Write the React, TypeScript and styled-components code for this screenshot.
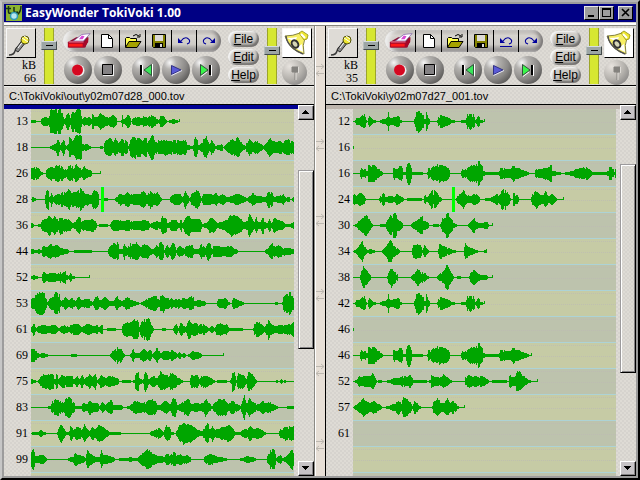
import React from "react";
import styled, { createGlobalStyle, css } from "styled-components";

/* ---------- waveform data ---------- */

// Envelope points are [position, half height] pairs. Positions are in thirds
// of a column; each line is stored in chunks of 480 positions.
const CHUNK = 480;
const COLUMNS = 263;

type Line = { label: string; head?: string; tail?: string; cursor?: number };
type DeckData = {
  path: string;
  kb: number;
  origin: number;
  active: boolean;
  shaded: number;
  thumb: [number, number, number];
  undoLine: boolean;
  lines: Line[];
};

const SPEECH_A =
  "99,0 104,0 108,3 118,3 122,5 133,6 138,1 143,0 145,5 150,4 158,1 175,0 190,2 200,3 204,9 208,3 215,3 222,4 235,5 241,1 250,0 280,0 284,4 289,10 292,12 300,8 310,6 314,1 319,9 324,3 330,0 350,0 355,5 360,6 370,5 380,4 396,1 410,0 436,1 442,7 450,8 460,6 466,1 474,5 479,4";
const SPEECH_B =
  "99,0 118,0 122,5 128,3 135,4 140,1 145,8 152,7 160,8 170,6 182,2 190,0 217,0 220,6 225,4 232,4 238,7 246,7 248,1 256,1 260,10 268,11 272,6 276,1 292,1 305,1 310,0 320,0 323,5 330,4 338,7 345,6 355,9 365,8 375,7 385,5 390,0 420,0 425,4 432,3 445,6 450,8 460,7 470,9 474,12 479,12";
const SPEECH_B_TAIL =
  "0,8 6,7 9,2 20,1 48,1 55,1 60,5 70,5 82,4 90,4 100,8 105,5 115,5 125,3 135,2 150,0";

const LEFT: DeckData = {
  path: "C:\\TokiVoki\\out\\y02m07d28_000.tov",
  kb: 66,
  origin: 93,
  active: true,
  shaded: 1,
  thumb: [50, 178, 113],
  undoLine: false,
  lines: [
    { label: "13", head: "93,1 105,1 108,0 120,0 125,3 135,4 146,3 150,12 165,12 184,12 188,4 195,3 200,8 205,8 209,3 216,10 222,8 232,12 241,12 244,2 252,4 260,3 265,4 272,3 277,8 283,4 290,4 300,8 306,6 316,4 325,4 338,6 346,4 352,0 362,0 366,6 370,1 376,3 382,7 388,5 392,0 400,3 415,4 425,3 434,6 440,3 452,6 462,4 475,1 479,3", tail: "0,5 8,5 16,2 20,0 32,1 40,2 48,1 57,0" },
    { label: "18", head: "93,0 148,0 152,1 165,3 173,8 180,2 190,8 196,1 203,2 208,10 218,6 225,11 243,12 246,3 252,2 258,3 268,1 272,0 298,0 302,1 310,0 313,6 330,9 337,5 345,8 355,4 365,8 380,6 384,1 390,8 400,10 418,9 425,6 438,10 442,5 450,10 455,12 459,11 464,5 475,6", tail: "0,6 15,7 30,6 40,7 60,6 75,7 82,2 95,1 98,2 104,10 110,8 114,2 125,4 130,8 138,10 143,5 148,3 153,7 160,4 165,1 185,3 190,0 197,3 205,5 215,7 225,7 233,10 240,5 250,2 255,1 260,6 267,7 280,4 287,7 300,3 310,1 318,4 328,9 337,6 348,5 360,6 367,4 375,7 385,7 402,5" },
    { label: "26", head: "93,5 105,6 113,5 123,1 134,0 140,4 152,6 160,5 170,8 180,7 190,6 198,3 206,7 215,8 220,4 228,9 235,5 245,4 252,6 258,4 270,3 276,0 302,0" },
    { label: "28", cursor: 70, head: "93,0 96,2 103,1 110,0 133,0 137,8 144,9 148,1 154,7 158,2 165,4 175,5 185,7 195,6 207,10 213,6 225,7 240,10 255,6 265,5 272,4 280,9 292,7 297,0 320,1 325,0 342,0 350,2 358,6 370,4 382,7 395,4 405,5 418,5 430,8 440,4 450,9 460,5 470,6 479,4", tail: "0,2 8,0 28,0 32,3 45,5 58,5 65,2 75,8 83,3 88,1 93,5 100,6 110,9 117,6 122,1 130,5 145,5 160,4 167,6 175,3 185,5 192,4 200,2 215,3 230,5 248,3 260,1 268,3 278,6 287,3 300,3 308,2 315,2 325,8 335,7 340,2 355,3 370,5 377,1 385,2 392,0 398,2 402,2" },
    { label: "36", head: "93,2 103,0 120,1 127,5 138,6 146,10 155,6 164,9 170,6 180,8 195,6 208,5 217,2 225,3 235,8 245,4 260,5 275,6 285,4 292,0 300,1 318,1 328,0 338,5 350,5 365,4 380,5 400,4 420,4 432,5 443,4 450,1 460,3 470,4 479,3", tail: "0,3 5,8 17,7 22,1 30,5 50,5 55,1 62,6 67,2 75,7 85,10 92,6 105,6 120,6 125,1 138,2 150,7 162,6 170,2 180,3 190,4 200,6 212,10 230,8 242,6 250,3 260,4 267,12 275,6 282,3 288,8 293,3 300,3 308,8 315,3 320,2 328,6 334,2 342,8 350,5 365,4 375,1 388,1 402,3" },
    { label: "44", head: "93,2 108,1 115,2 122,1 128,5 138,4 150,7 158,5 172,6 180,3 200,2 208,0 220,0 222,1 272,1 276,0 323,0 325,4 340,7 352,9 358,2 365,2 373,8 380,3 388,7 400,7 408,8 420,4 430,6 440,7 450,3 460,2 468,6 474,4 479,9", tail: "0,9 8,7 12,1 20,6 28,3 36,8 42,7 48,1 55,5 70,3 80,5 95,6 100,2 115,2 122,7 130,5 136,4 143,9 150,6 155,1 160,5 175,5 190,4 210,5 225,2 235,0 310,0 320,2 328,5 335,8 345,4 355,6 365,4 380,3 402,2" },
    { label: "52", head: "93,1 100,2 108,1 115,0 122,0 130,5 140,3 150,4 163,4 170,3 180,5 187,4 193,7 200,2 205,1 210,4 216,1 228,0 269,0" },
    { label: "53", head: "93,4 103,7 113,10 130,11 137,4 142,1 150,5 158,6 166,11 176,9 182,3 188,4 195,6 205,3 215,5 225,2 235,6 243,3 265,4 276,1 285,6 292,7 300,3 315,6 328,2 340,2 350,7 358,3 367,2 377,6 390,5 400,2 410,1 418,0 430,2 445,5 460,7 472,6 479,2", tail: "0,7 8,8 16,5 30,5 40,3 50,5 60,3 70,5 82,4 88,6 97,7 103,2 115,3 130,2 138,0 168,0 175,4 185,4 195,5 205,1 213,0 218,5 228,4 240,2 253,0 340,0 350,1 356,0 365,0 370,7 380,9 388,11 395,7 402,4" },
    { label: "61", head: "93,2 101,6 106,1 115,3 130,4 145,3 155,4 165,4 175,1 185,3 195,4 205,2 215,5 232,5 245,2 255,4 265,5 280,3 290,4 300,3 305,5 309,0 330,1 345,1 350,0 362,0 370,5 380,7 392,6 400,9 412,8 418,2 422,7 435,11 445,10 457,3 460,0 479,0", tail: "0,0 12,1 20,0 38,0 42,3 48,5 54,1 62,7 70,3 75,2 85,9 95,5 105,6 115,4 128,5 138,3 145,1 155,3 162,1 170,5 180,6 190,4 198,5 206,1 220,1 245,1 252,0 278,0 284,7 300,6 312,2 318,5 324,10 332,5 345,3 360,4 375,4 390,5 402,7" },
    { label: "69", head: "93,6 104,6 112,2 118,1 128,2 138,1 148,0 210,0 212,1 228,1 230,0 328,0 338,4 346,6 355,9 363,6 370,2 375,0 388,0 392,2 398,6 404,2 415,2 422,4 430,6 440,4 450,5 457,1 463,3 470,7 479,3", tail: "0,2 12,4 25,4 35,5 44,3 50,1 58,3 65,1 72,2 80,0 88,1 95,4 108,3 120,2 128,0 191,0" },
    { label: "75", head: "93,2 103,1 108,0 116,1 120,4 130,6 145,7 158,7 163,1 170,8 174,2 185,6 195,5 205,5 215,5 222,2 230,5 237,2 245,6 252,2 260,4 268,7 275,4 285,7 292,1 302,6 315,3 328,5 340,4 350,3 358,0 372,1 388,1 393,0 402,1 406,8 414,8 418,2 428,1 434,10 440,7 445,2 458,5 470,3 479,7", tail: "0,9 10,7 20,6 32,8 45,6 55,3 65,1 70,0 88,0 92,6 100,5 110,6 118,2 125,6 138,5 150,3 160,1 165,0 175,1 195,1 205,0 212,1 216,9 222,8 228,1 233,7 250,6 257,2 265,9 275,7 285,2 290,0 345,0 348,1 355,0 364,2 368,0 375,1 380,0 402,0" },
    { label: "83", head: "93,0 140,0 145,1 150,1 156,6 170,8 182,6 188,4 195,8 208,10 220,5 225,1 242,1 250,4 260,3 268,7 278,4 290,4 298,1 306,5 315,2 325,5 333,7 340,2 350,2 360,2 372,0 388,1 396,4 405,6 415,5 425,4 435,5 445,7 455,7 465,6 472,2 480,2", tail: "0,2 15,6 30,3 38,9 46,8 50,2 60,3 72,6 84,8 92,3 100,4 110,4 120,3 128,4 136,8 145,4 155,1 163,4 175,8 195,7 205,3 213,6 222,5 232,3 240,1 246,6 252,12 256,6 268,8 278,5 290,3 298,3 306,6 315,4 325,5 338,3 350,1 355,0 378,0 384,1 402,1" },
    { label: "91", head: "93,0 95,1 112,1 120,3 130,1 142,0 170,0 174,4 181,9 190,5 198,1 206,1 211,7 220,3 230,6 240,5 247,4 253,9 260,4 267,2 275,6 285,4 295,8 308,6 318,3 330,1 360,1 365,0 445,0 455,2 465,3 475,5 479,4", tail: "0,4 8,1 18,7 26,6 34,1 44,0 50,3 58,8 65,12 75,9 90,8 100,6 112,3 125,2 135,7 143,10 148,3 155,8 162,4 175,4 182,6 195,6 205,8 215,5 225,1 240,1 250,4 260,4 268,7 280,4 290,5 300,4 312,1 320,0 354,0 362,5 375,6 390,6 402,7" },
    { label: "99", head: "93,7 98,10 106,4 112,3 122,4 133,3 140,0 198,0 205,1 215,2 225,6 235,4 245,4 255,1 262,9 270,5 278,4 285,2 298,2 303,9 308,4 318,4 328,3 340,2 345,0 365,1 380,1 390,2 400,1 410,1 420,4 430,6 440,10 448,8 460,5 475,3 479,3", tail: "0,3 12,2 18,5 32,5 42,7 52,4 60,5 68,3 78,4 88,2 95,0 128,0 135,3 150,5 165,3 180,2 195,1 205,0 235,0 245,1 262,3 275,2 285,1 290,0 318,0 325,7 333,10 342,9 348,1 360,4 366,1 375,2 385,5 395,10 402,8" },
    { label: "" },
  ],
};

const RIGHT: DeckData = {
  path: "C:\\TokiVoki\\y02m07d27_001.tov",
  kb: 35,
  origin: 99,
  active: false,
  shaded: 0,
  thumb: [44, 208, 89],
  undoLine: true,
  lines: [
    { label: "12", head: SPEECH_A, tail: "0,1 4,1 8,0 14,0" },
    { label: "16", head: "99,0 100,0" },
    { label: "16", head: SPEECH_B, tail: SPEECH_B_TAIL + " 163,0 166,4 175,4 190,5 205,6 212,9 216,2 235,1 245,0 262,1 275,2 290,4 305,5 318,6 328,4 335,1 345,1 365,1 375,1 384,2 387,6 397,5 402,1 404,4 408,3" },
    { label: "24", cursor: 99, head: "99,4 108,5 120,6 130,4 138,0 175,0 180,3 190,6 196,2 210,3 222,2 230,5 240,3 252,0 270,1 300,1 308,0 313,4 320,2 328,5 335,10 338,3 343,9 350,6 358,2 368,0 405,0 412,3 420,5 430,8 438,4 450,3 460,5 470,4 479,2", tail: "0,0 28,1 40,3 50,5 58,4 65,10 75,9 85,5 92,0 96,0 99,6 110,4 118,0 150,0 157,6 170,8 178,5 188,4 195,8 205,3 215,5 225,2 232,0 251,0" },
    { label: "30", head: "99,0 108,1 115,4 128,7 137,10 146,6 155,1 160,0 195,1 203,6 210,10 216,7 221,14 227,12 230,6 240,4 250,0 268,0 285,4 298,7 306,8 312,4 322,3 328,0 350,1 358,0 366,6 375,8 380,14 388,8 395,5 405,1 412,0 440,0 450,3 460,7 468,3 479,2", tail: "0,2 22,3 25,0 38,0" },
    { label: "34", head: "99,0 108,2 118,6 125,9 133,4 140,1 150,2 160,1 165,0 182,0 195,4 205,9 212,11 220,5 230,3 240,0 272,0 280,6 290,7 302,5 306,1 312,6 320,2 328,0 352,0 358,7 370,5 385,3 400,1 410,0 430,0 434,8 445,4 455,3 468,1 479,0", tail: "0,0 8,0 12,1 18,1" },
    { label: "38", head: "99,0 118,0 124,6 130,10 138,7 148,3 154,0 200,0 205,5 212,9 220,6 230,3 235,0 270,0 280,3 292,8 300,5 312,4 322,1 330,0 348,0 358,3 370,6 380,13 388,7 395,3 402,0 415,1 425,0 445,0 452,5 462,7 472,4 479,3", tail: "0,2 18,2 24,0 36,0" },
    { label: "42", head: SPEECH_A, tail: "0,1 4,1 8,0 14,0" },
    { label: "46", head: "99,0 100,0" },
    { label: "46", head: SPEECH_B, tail: SPEECH_B_TAIL + " 155,0" },
    { label: "52", head: "99,0 110,1 115,5 122,4 135,5 150,5 158,8 164,3 170,0 178,1 190,0 207,1 220,3 235,3 248,5 260,4 270,6 280,1 290,1 315,1 322,0 330,1 333,6 342,4 355,4 370,6 380,4 390,1 400,0 432,0 436,4 448,6 458,4 465,5 479,3", tail: "0,5 10,4 20,2 30,0 40,1 75,1 84,0 88,6 96,4 104,4 110,10 118,9 128,5 138,3 145,1 155,0 173,0" },
    { label: "57", head: "99,0 106,2 118,5 128,8 138,6 148,4 160,6 170,4 180,2 188,0 205,1 220,3 235,6 242,4 250,10 260,8 270,5 277,1 281,6 290,4 298,1 305,0 335,0 340,5 352,8 362,4 370,4 380,8 390,4 397,6 405,4 412,1 420,0 434,0" },
    { label: "61" },
    { label: "" },
    { label: "" },
  ],
};

const points = (text: string | undefined, shift: number) =>
  (text ? text.split(" ") : []).map((pair) => {
    const [x, h] = pair.split(",").map(Number);
    return [(x + shift) / 3, h] as [number, number];
  });

function wavePath(line: Line, origin: number) {
  const env = [...points(line.head, -origin), ...points(line.tail, CHUNK - origin)];
  if (!env.length) return "";
  const end = Math.min(COLUMNS, Math.floor(env[env.length - 1][0]));
  const ripple = (n: number) => Math.abs(Math.sin(n * 127.1) * 4375.5) % 1;
  let d = "";
  let i = 0;
  for (let x = 0; x <= end; x++) {
    while (i < env.length - 2 && env[i + 1][0] < x) i++;
    const [x0, h0] = env[i];
    const [x1, h1] = env[Math.min(i + 1, env.length - 1)];
    const raw = x1 > x0 ? (x - x0) / (x1 - x0) : 0;
    const t = Math.min(1, Math.max(0, (raw - 0.1) * 1.25));
    const h = h0 + (h1 - h0) * t;
    const notch = h > 3 && ripple(x * 3 + h1) > 0.93 ? 0.7 : 1;
    const up = h > 2.5 ? h * notch * (0.9 + ripple(x + h0) * 0.2) : h;
    const down = h > 2.5 ? h * notch * (0.9 + ripple(x + h0 + 500) * 0.2) : h;
    const a = Math.min(12, Math.round(up));
    const b = Math.min(12, Math.round(down));
    d += `M${x} ${12 - a}h1v${a + b + 1}h-1z`;
  }
  if (end < COLUMNS - 2) d += `M${end} ${end < 2 ? 11 : 10}h1v3h-1z`;
  return d;
}

/* ---------- styles ---------- */

const GlobalStyle = createGlobalStyle`
  * { box-sizing: border-box; }
  body { margin: 0; background: #000; font-family: "Liberation Sans", Arial, sans-serif; color: #000; }
  button { font: inherit; color: inherit; padding: 0; margin: 0; }
`;

const paper = css`
  background: repeating-conic-gradient(#d6d3ce 0 25%, #dedbd5 0 50%) 0 0 / 4px 4px;
`;

const Frame = styled.main`
  display: flex;
  flex-direction: column;
  height: 100vh;
  overflow: hidden;
  border: 2px solid #9c9c9c;
  border-top-color: #b5b5b5;
  border-left-color: #c6c6c6;
  border-right-color: #000;
  border-bottom-color: #000;
  background: #9c9c9c;
  padding: 2px;
`;

const TitleBar = styled.header`
  display: flex;
  align-items: center;
  flex: none;
  height: 18px;
  padding: 0 3px 0 2px;
  background: #000084;
  color: #fff;
`;

const Title = styled.h1`
  flex: 1;
  margin: 0 0 0 3px;
  font: bold 12px/18px "Open Sans", "Liberation Sans", sans-serif;
  white-space: nowrap;
`;

const WindowButton = styled.button<{ $apart?: boolean }>`
  display: grid;
  place-items: center;
  width: 15px;
  height: 14px;
  margin-left: ${(p) => (p.$apart ? 4 : 0)}px;
  background: #9c9c9c;
  border: 1px solid;
  border-color: #e7e7e7 #000 #000 #e7e7e7;
`;

const Decks = styled.div`
  display: grid;
  grid-template-columns: minmax(0, 1fr) 12px minmax(0, 1fr);
  flex: 1;
  min-height: 0;
  border-top: 1px solid #d6d3ce;
  box-shadow: inset 0 2px #fff;
  padding-top: 3px;
  background: #84827b;
`;

const DeckPanel = styled.section`
  display: flex;
  flex-direction: column;
  min-height: 0;
  ${paper}
`;

const Toolbar = styled.div`
  display: grid;
  grid-template-columns: 35px 22px 165px 36px 18px 30px;
  justify-content: space-between;
  flex: none;
  height: 60px;
  padding: 2px 2px 1px;
  border-bottom: 1px solid #000;
`;

const ToolColumn = styled.div<{ $gap?: number; $pad?: number }>`
  display: flex;
  flex-direction: column;
  align-items: flex-start;
  gap: ${(p) => p.$gap ?? 0}px;
  padding-top: ${(p) => p.$pad ?? 0}px;
`;

const SquareButton = styled.button<{ $bright?: boolean }>`
  display: grid;
  place-items: center;
  width: 30px;
  height: 30px;
  border: 1px solid;
  border-color: #f7f7f7 #000 #000 #f7f7f7;
  background: ${(p) => (p.$bright ? "#fff" : "#dedbd6")};
`;

const Size = styled.p`
  display: flex;
  flex-direction: column;
  width: 30px;
  margin: 0;
  font: 12px/13px "Liberation Serif", "Times New Roman", serif;
  text-align: right;
`;

const Fader = styled.input`
  appearance: none;
  writing-mode: vertical-lr;
  direction: rtl;
  width: 16px;
  height: 56px;
  margin: 0;
  background: linear-gradient(90deg, #9ca52a 1px, #d6e731 1px 9px, #9ca52a 9px) 3px 0 / 10px 56px no-repeat;
  &::-webkit-slider-runnable-track {
    width: 16px;
    height: 56px;
  }
  &::-webkit-slider-thumb {
    appearance: none;
    width: 16px;
    height: 9px;
    border: 1px solid;
    border-color: #d6dedf #424a4a #424a4a #b5bdbd;
    background: linear-gradient(#000, #000) 4px 3px / 7px 1px no-repeat, #9ca5a5;
  }
`;

const Pill = styled.div`
  display: grid;
  grid-template-columns: 31px 26px 26px 26px 25px 24px;
  width: 158px;
  height: 22px;
  overflow: hidden;
  border-radius: 11px;
  background: linear-gradient(#b5b0ab, #d6d3ce 25%, #cecbc6 65%, #848080);
  box-shadow: inset 4px 0 4px #efefef, inset -3px -1px 4px #737070;
`;

const PillButton = styled.button`
  display: grid;
  place-items: center;
  border: 0;
  border-right: 1px solid #000;
  background: transparent;
  &:last-child {
    border-right: 0;
  }
`;

const Transport = styled.div`
  display: grid;
  grid-template-columns: 30px 38px 30px 30px 28px;
  padding-left: 1px;
`;

const Sphere = styled.button<{ $soft?: boolean }>`
  display: grid;
  place-items: center;
  width: ${(p) => (p.$soft ? 25 : 28)}px;
  height: ${(p) => (p.$soft ? 25 : 28)}px;
  border: 0;
  border-radius: 50%;
  background: ${(p) =>
    p.$soft
      ? "radial-gradient(circle at 30% 25%, #e7e3de, #b5b2ad 50%, #949290 75%)"
      : "radial-gradient(circle at 28% 24%, #f7f7f7, #b5b3b0 22%, #8c8a88 55%, #4a4948 90%)"};
`;

const MenuButton = styled.button`
  width: 31px;
  height: 16px;
  border: 0;
  border-radius: 8px;
  background: linear-gradient(#d6d3ce, #c6c3be 60%, #a5a29e);
  box-shadow: inset 2px 1px 2px #f7f7f7, inset -2px -2px 2px #73716f;
  font-size: 12px;
  line-height: 14px;
  text-align: center;
`;

const PathBar = styled.p`
  flex: none;
  height: 19px;
  margin: 0;
  padding-left: 5px;
  border-bottom: 1px solid #000;
  box-shadow: inset 0 1px #efefeb;
  font-size: 11px;
  line-height: 20px;
  white-space: nowrap;
`;

const Body = styled.div`
  display: grid;
  grid-template-columns: minmax(0, 1fr) 16px;
  flex: 1;
  min-height: 0;
`;

const Lines = styled.ol<{ $active: boolean }>`
  min-height: 0;
  margin: 0;
  padding: 0;
  overflow: hidden;
  list-style: none;
  border-top: 4px solid ${(p) => (p.$active ? "#000094" : "#bdb5ad")};
`;

const WaveRow = styled.li<{ $shade: boolean }>`
  display: grid;
  grid-template-columns: 27px minmax(0, 1fr);
  height: 26px;
  margin-right: 4px;
  font: 12px/24px "Liberation Serif", "Times New Roman", serif;

  svg {
    display: block;
    width: 100%;
    height: 26px;
    border-bottom: 1px solid #add3d6;
    background: ${(p) => (p.$shade ? "#bdc3ad" : "#c6cba5")};
  }
`;

const RowLabel = styled.span`
  padding-right: 3px;
  text-align: right;
`;

const Scroller = styled.div`
  display: flex;
  flex-direction: column;
  min-height: 0;
`;

const ScrollButton = styled.button`
  display: grid;
  place-items: center;
  flex: none;
  height: 15px;
  border: 1px solid;
  border-color: #fff #000 #000 #fff;
  box-shadow: inset -1px -1px #848284;
  background: #c6c3c6;
`;

const ScrollSpace = styled.div<{ $grow: number }>`
  flex: ${(p) => p.$grow} 1 0;
`;

const ScrollThumb = styled.div<{ $grow: number }>`
  flex: ${(p) => p.$grow} 1 0;
  border: 1px solid;
  border-color: #9c9a9c #000 #000 #9c9a9c;
  box-shadow: inset 1px 1px #fff, inset -1px -1px #848284;
  ${paper}
`;

const Divider = styled.div`
  overflow: hidden;
  border-left: 1px solid #8c8a84;
  border-right: 1px solid #000;
  box-shadow: inset 1px 0 #fff;
  background: #e7dfd6;

  svg {
    display: block;
    width: 10px;
    height: 75px;
  }
`;

/* ---------- icons ---------- */

const WindowIcon = () => (
  <svg width="16" height="16" viewBox="0 0 16 16" aria-hidden="true">
    <rect width="16" height="16" fill="#8cb531" />
    <path d="M2.500 1v6q0 2 3 1M0 3.500h5M8 2v4q0 2 4 1M15 1q0 6-4 9" fill="none" stroke="#173017" strokeWidth="1.500" />
    <circle cx="8" cy="11" r="3.5" fill="#b5e7ef" stroke="#319cb5" strokeWidth="1.5" />
  </svg>
);

const Mic = () => (
  <svg width="26" height="26" viewBox="0 0 26 26" aria-hidden="true">
    <path d="M1 25q5 0 6-4l2-4" fill="none" stroke="#393939" strokeWidth="1.5" />
    <path d="M7 20l8-11 3 3-8 10z" fill="#8c8c8c" stroke="#292929" />
    <path d="M10 18l6-8" stroke="#fff" strokeWidth="1" />
    <circle cx="17" cy="10" r="4" fill="#efe731" stroke="#525210" />
    <path d="M14 8l6 4M16 6l4 3" stroke="#fff" />
  </svg>
);

const Speaker = () => (
  <svg width="26" height="26" viewBox="0 0 26 26" aria-hidden="true">
    <path d="M1 6q8 0 15-3l5 5q-3 7-1 16Q6 21 1 6z" fill="#f7ef63" stroke="#848242" />
    <path d="M3 8q6 0 10-1l-2 5zM19 22q-5-2-7-4l6-4z" fill="#fff" />
    <path d="M2 6q1 11 17 18" fill="none" stroke="#525252" strokeWidth="1.5" />
    <ellipse cx="11" cy="14" rx="3" ry="4" transform="rotate(-35 11 14)" fill="#d6d6b5" stroke="#313131" strokeWidth="2" />
    <path d="M15 3l3-2 6 4-1 4-3 1z" fill="#efe731" stroke="#a5a229" />
    <path d="M17 4l4 4" stroke="#fff" strokeWidth="2" />
  </svg>
);

const Tray = () => (
  <svg width="25" height="18" viewBox="0 0 27 18" aria-hidden="true">
    <path d="M2 10l9-5h13v3l-3 8H3z" fill="#8c1031" />
    <path d="M2 10h18l4-5v5l-4 6H2z" fill="#a50829" />
    <path d="M3 12h15v3H3z" fill="#ff1818" />
    <path d="M8 9l9-7 9-1-7 8z" fill="#fff" stroke="#73509c" strokeWidth=".7" />
    <path d="M14 7l3-4 3 1-2 3z" fill="#d64ad6" />
    <path d="M3 10h16" stroke="#ff8ca5" />
  </svg>
);

const NewDoc = () => (
  <svg width="12" height="14" viewBox="0 0 12 14" aria-hidden="true">
    <path d="M.5.500h7l4 4v9H.5z" fill="#fff" stroke="#000" />
    <path d="M7.500.5v4H11" fill="none" stroke="#000" />
  </svg>
);

const OpenFolder = () => (
  <svg width="18" height="16" viewBox="0 0 18 16" aria-hidden="true">
    <path d="M1.500 14V5.500l1-1h3l1 1h6V8" fill="#ffff52" stroke="#000" />
    <path d="M1.500 14.500l3.500-6h12l-4 6z" fill="#a5a200" stroke="#000" />
    <path d="M9 3q3-3 6 0M16 1v3h-3" fill="none" stroke="#000" />
  </svg>
);

const Save = () => (
  <svg width="14" height="14" viewBox="0 0 14 14" aria-hidden="true">
    <path d="M.5.5h13v13h-12l-1-1z" fill="#848200" stroke="#000" />
    <path d="M3 1h8v6H3z" fill="#dedbd6" />
    <path d="M3 9h8v4H3z" fill="#000" />
    <path d="M8 10h2v3H8z" fill="#dedbd6" />
  </svg>
);

const Turn = ({ flip, underline }: { flip?: boolean; underline?: boolean }) => (
  <svg width="14" height="12" viewBox="0 0 14 12" aria-hidden="true">
    <g transform={flip ? "matrix(-1 0 0 1 14 0)" : undefined}>
      <path d="M4 6q3-4 6-3 4 2 2 5l-2 1" fill="none" stroke="#00009c" strokeWidth="1.100" />
      <path d="M1 3v5h5z" fill="#00009c" />
    </g>
    {underline && <path d="M1 11.500h12" stroke="#00009c" />}
  </svg>
);

const Glyph = ({ kind }: { kind: "record" | "stop" | "back" | "play" | "next" | "pin" }) => (
  <svg width="16" height="16" viewBox="0 0 16 16" aria-hidden="true">
    {kind === "record" && (
      <>
        <circle cx="8.500" cy="8.500" r="6" fill="#efefef" />
        <circle cx="7.500" cy="8" r="5.500" fill="#d60821" />
      </>
    )}
    {kind === "stop" && (
      <>
        <path d="M3 3h11v11H3z" fill="#efefef" />
        <path d="M2.500 2.500h10v10h-10z" fill="#848284" stroke="#000" />
      </>
    )}
    {kind === "back" && (
      <>
        <path d="M3 3v10" stroke="#000" strokeWidth="2" />
        <path d="M13.500 2.500v11L6 8z" fill="#39e75a" stroke="#31523a" />
        <path d="M14.500 2v12.500M4.500 3v10" stroke="#fff" />
      </>
    )}
    {kind === "play" && (
      <>
        <path d="M3.500 3.500v9L13 8z" fill="#5a5ad6" stroke="#313184" />
        <path d="M3.500 13.500L14 8.500" stroke="#e7e7f7" />
      </>
    )}
    {kind === "next" && (
      <>
        <path d="M2.500 2.500v11L10 8z" fill="#39f74a" stroke="#31523a" />
        <path d="M12 3v10" stroke="#000" strokeWidth="2" />
        <path d="M13.500 3v11M3 14.500L9 10" stroke="#fff" />
      </>
    )}
    {kind === "pin" && (
      <>
        <path d="M5 2h6v5H5zM8 7v8" fill="#84827e" stroke="#84827e" />
        <path d="M11.500 2v6M9 8v7" stroke="#dedbd6" />
      </>
    )}
  </svg>
);

const Arrow = ({ down }: { down?: boolean }) => (
  <svg width="8" height="5" viewBox="0 0 8 5" shapeRendering="crispEdges" aria-hidden="true">
    <path d={down ? "M0 0h7v1H0zM1 1h5v1H1zM2 2h3v1H2zM3 3h1v1H3z" : "M3 0h1v1H3zM2 1h3v1H2zM1 2h5v1H1zM0 3h7v1H0z"} />
  </svg>
);

/* ---------- components ---------- */

function Wave({ line, origin }: { line: Line; origin: number }) {
  return (
    <svg viewBox={`0 0 ${COLUMNS} 25`} preserveAspectRatio="none" shapeRendering="crispEdges" aria-hidden="true">
      <path d={`M0 13.500H${COLUMNS}M0 2.500H${COLUMNS}`} stroke="#bdbab5" strokeDasharray="1 1" opacity=".7" />
      <path d={wavePath(line, origin)} fill="#00a600" />
      {line.cursor !== undefined && <rect x={line.cursor} width="3" height="25" fill="#00ff00" />}
    </svg>
  );
}

function Deck({ data }: { data: DeckData }) {
  return (
    <DeckPanel aria-label={data.path}>
      <Toolbar>
        <ToolColumn $gap={1}>
          <SquareButton aria-label="Microphone"><Mic /></SquareButton>
          <Size><span>kB</span><span>{data.kb}</span></Size>
        </ToolColumn>
        <Fader type="range" aria-label="Input level" min="0" max="100" defaultValue="72" />
        <ToolColumn $gap={4} $pad={2}>
          <Pill>
            <PillButton aria-label="Clear"><Tray /></PillButton>
            <PillButton aria-label="New"><NewDoc /></PillButton>
            <PillButton aria-label="Open"><OpenFolder /></PillButton>
            <PillButton aria-label="Save"><Save /></PillButton>
            <PillButton aria-label="Undo"><Turn underline={data.undoLine} /></PillButton>
            <PillButton aria-label="Redo"><Turn flip /></PillButton>
          </Pill>
          <Transport>
            <Sphere aria-label="Record"><Glyph kind="record" /></Sphere>
            <Sphere aria-label="Stop"><Glyph kind="stop" /></Sphere>
            <Sphere aria-label="To start"><Glyph kind="back" /></Sphere>
            <Sphere aria-label="Play"><Glyph kind="play" /></Sphere>
            <Sphere aria-label="To end"><Glyph kind="next" /></Sphere>
          </Transport>
        </ToolColumn>
        <ToolColumn $gap={2} $pad={3}>
          <MenuButton><u>F</u>ile</MenuButton>
          <MenuButton><u>E</u>dit</MenuButton>
          <MenuButton><u>H</u>elp</MenuButton>
        </ToolColumn>
        <Fader type="range" aria-label="Output level" min="0" max="100" defaultValue="61" />
        <ToolColumn $gap={2}>
          <SquareButton $bright aria-label="Speaker"><Speaker /></SquareButton>
          <Sphere $soft aria-label="Marker"><Glyph kind="pin" /></Sphere>
        </ToolColumn>
      </Toolbar>
      <PathBar>{data.path}</PathBar>
      <Body>
        <Lines $active={data.active}>
          {data.lines.map((line, i) => (
            <WaveRow key={i} $shade={i % 2 === data.shaded}>
              <RowLabel>{line.label}</RowLabel>
              <Wave line={line} origin={data.origin} />
            </WaveRow>
          ))}
        </Lines>
        <Scroller>
          <ScrollButton aria-label="Scroll up"><Arrow /></ScrollButton>
          <ScrollSpace $grow={data.thumb[0]} />
          <ScrollThumb $grow={data.thumb[1]} />
          <ScrollSpace $grow={data.thumb[2]} />
          <ScrollButton aria-label="Scroll down"><Arrow down /></ScrollButton>
        </Scroller>
      </Body>
    </DeckPanel>
  );
}

export default function App() {
  return (
    <>
      <GlobalStyle />
      <Frame>
        <TitleBar>
          <WindowIcon />
          <Title>EasyWonder TokiVoki 1.00</Title>
          <WindowButton aria-label="Minimize">
            <svg width="11" height="10" viewBox="0 0 11 10"><path d="M2 8h6" stroke="#000" strokeWidth="2" /></svg>
          </WindowButton>
          <WindowButton aria-label="Maximize">
            <svg width="11" height="10" viewBox="0 0 11 10" shapeRendering="crispEdges"><path d="M1 0h9v9H1zM2 2v6h7V2z" fillRule="evenodd" /></svg>
          </WindowButton>
          <WindowButton $apart aria-label="Close">
            <svg width="11" height="10" viewBox="0 0 11 10"><path d="M2 1l7 7M9 1L2 8" stroke="#000" strokeWidth="1.600" /></svg>
          </WindowButton>
        </TitleBar>
        <Decks>
          <Deck data={LEFT} />
          <Divider>
            {[0, 1, 2, 3, 4, 5].map((n) => (
              <svg key={n} viewBox="0 0 10 75" aria-hidden="true">
                <path d="M1 40.500h8M6 38l3 2.500-3 2.500M9 47.500H1M4 45l-3 2.500 3 2.500" fill="none" stroke="#bdb8b0" />
              </svg>
            ))}
          </Divider>
          <Deck data={RIGHT} />
        </Decks>
      </Frame>
    </>
  );
}
